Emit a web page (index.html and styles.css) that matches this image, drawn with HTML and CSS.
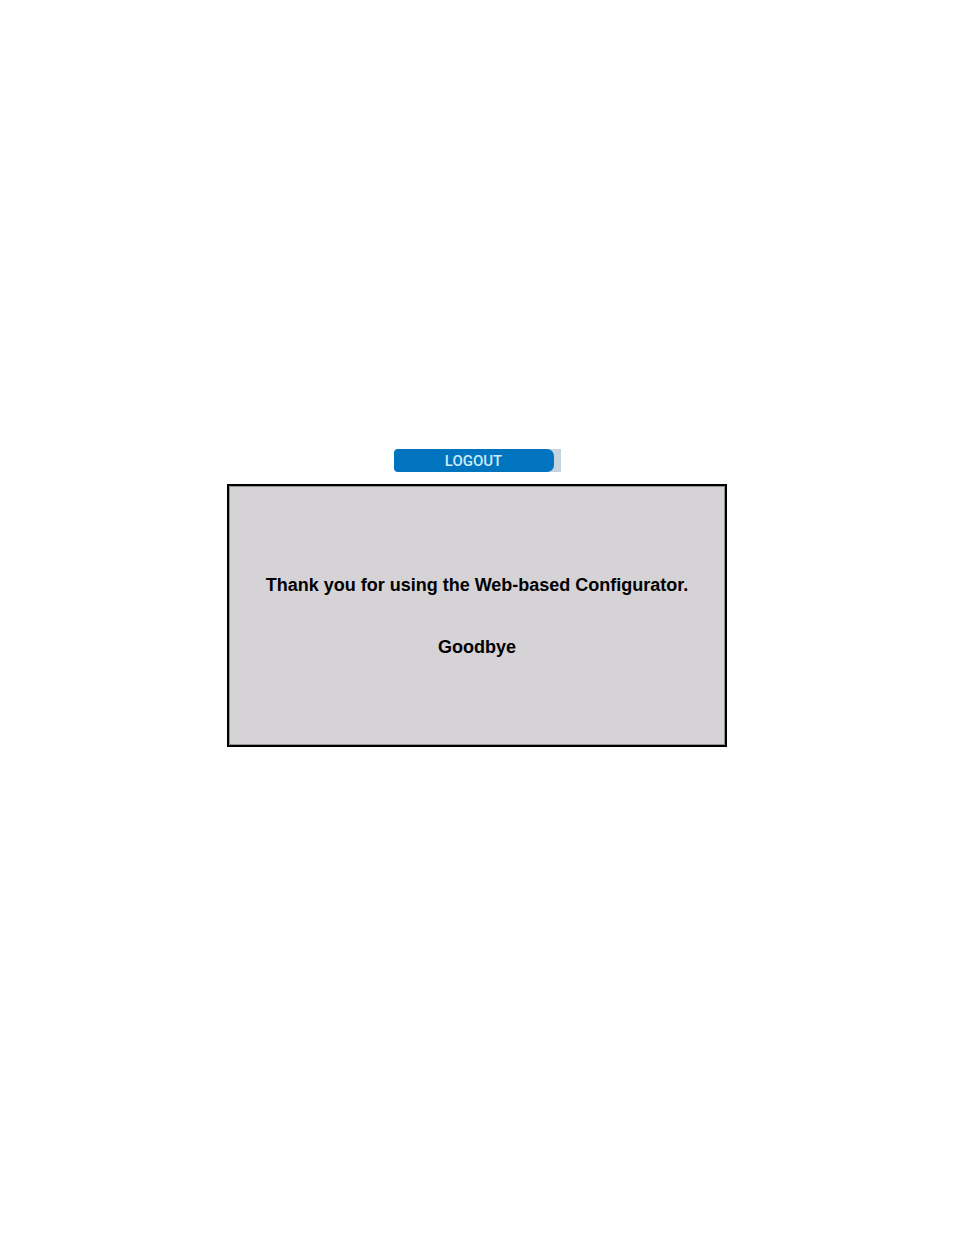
FILE: index.html
```html
<!DOCTYPE html>
<html lang="en">
<head>
<meta charset="utf-8">
<meta name="viewport" content="width=device-width, initial-scale=1">
<title>Logout</title>
<link rel="stylesheet" href="styles.css">
</head>
<body>
<main class="page">
  <div class="tab"><button class="logout" type="button">LOGOUT</button></div>
  <section class="panel">
    <p class="message">Thank you for using the Web-based Configurator.</p>
    <p class="message">Goodbye</p>
  </section>
</main>
</body>
</html>
```
FILE: styles.css
```css
* {
  box-sizing: border-box;
}

body {
  margin: 0;
  background: #fff;
  color: #000;
  font-family: "Liberation Sans", Arial, sans-serif;
}

.page {
  display: flex;
  flex-direction: column;
  align-items: center;
  gap: 12px;
  min-height: 100vh;
  padding: 449px 16px 32px;
}

.tab {
  display: flex;
  padding-right: 7px;
  background: linear-gradient(to right, #fff 50%, #c5d3dc 50%);
}

.logout {
  width: 160px;
  height: 23px;
  padding: 2px 0 0;
  border: 0;
  border-radius: 4px 7px 7px 4px;
  background: #0074bf;
  color: #c9ecfa;
  font-family: Roboto, sans-serif;
  font-size: 15px;
  font-weight: 500;
  line-height: 21px;
}

.panel {
  display: flex;
  flex-direction: column;
  gap: 40px;
  width: 100%;
  max-width: 500px;
  padding: 88px 16px 87px;
  border: 2px solid #000;
  background: #d5d3d6;
  box-shadow: inset 0 0 0 1px #929193;
  text-align: center;
}

.message {
  margin: 0;
  font-size: 18px;
  font-weight: bold;
  line-height: 22px;
}
```
